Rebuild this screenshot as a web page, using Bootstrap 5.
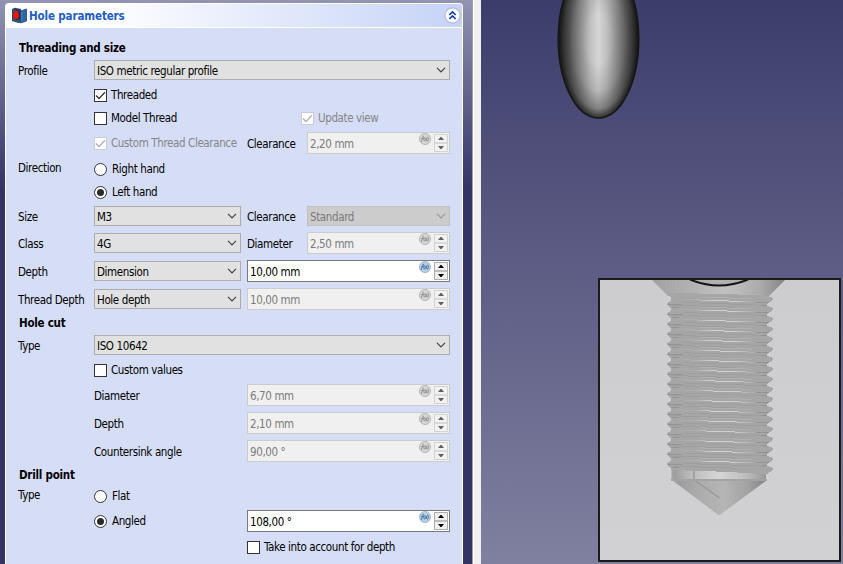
<!DOCTYPE html>
<html lang="en">
<head>
<meta charset="utf-8">
<title>Hole parameters</title>
<link href="https://cdn.jsdelivr.net/npm/bootstrap@5.3.0/dist/css/bootstrap.min.css" rel="stylesheet">
<style>
body{width:843px;height:564px;overflow:hidden;font:11.5px/16px "DejaVu Sans Condensed","DejaVu Sans",sans-serif;font-stretch:condensed;color:#000;letter-spacing:-.38px;white-space:nowrap}
.side{width:473px;padding:3px 9px 0 5px;background:linear-gradient(#9393b2,#333366 190px);border-right:1px solid #a0a0a0}
.splitter{width:8px;background:#f0f0f0;border-left:1px solid #fff}
.task{height:561px;border:1px solid #fff;border-bottom:0;border-radius:4px 4px 0 0;background:#d6def7;overflow:hidden}
.task-head{height:24px;border-bottom:1px solid #fff;background:linear-gradient(90deg,#fff 20%,#c6d3f7);padding:0 1px 0 5px}
.task-title{font-weight:700;color:#215dc6;letter-spacing:-.12px;margin-left:1px}
.params{display:grid;padding:9px 0 0 12px;grid-template-columns:76px 153px 60px 143px;grid-template-rows:22px 22px 28px 18px 32px 20px 26px 22px 32px 24px 32px 16px 28px 22px 28px 28px 28px 20px 22px 28px 24px;align-items:center}
.head{grid-column:1/-1;font-weight:700;letter-spacing:-.24px;padding-left:1px}
.params>label:not(.d-flex){padding-top:1px}
.c1{grid-column:1}.c2{grid-column:2}.c3{grid-column:3}.c4{grid-column:4}.wide{grid-column:2/-1}.c34{grid-column:3/-1}
.c2.combo{width:147px}
.combo{height:20px;border:1px solid #adadad;background:#e1e1e1;padding:0 3px 0 2px}
.combo span,.spin span{padding-top:1px}
.combo svg{color:#444}
.combo.off{background:#ccc;border-color:#bfbfbf;color:#7b7b7b}
.combo.off svg{color:#999}
.spin{height:22px;border:1px solid #7a7a7a;background:#fff;padding:0 1px 0 2px}
.spin.off{background:#f0f0f0;border-color:#ccc;color:#7b7b7b}
.spin svg{flex:none}
.fx-gap{margin-left:3px}
.off-text{color:#858585}
.tick{width:13px;height:13px;border:1px solid #333;background:#fff;margin-right:4px;flex:none;color:#333}
.off-text .tick{border-color:#ccc;color:#b0b0b0}
.tick.dot{border-radius:50%;margin-right:5px}
.tick svg{display:block}
.view{background:linear-gradient(#3d3d6c,#8080a0)}
.inset{left:117px;top:278px;width:243px;height:284px;border:2px solid #1b1b1b;background:linear-gradient(#cdcdd0,#d1d1d3)}
</style>
<script src="https://cdn.jsdelivr.net/npm/bootstrap@5.3.0/dist/js/bootstrap.bundle.min.js"></script>
</head>
<body class="d-flex m-0">
<svg width="0" height="0" class="position-absolute">
<symbol id="chev" viewBox="0 0 10 6"><path d="M1 .8 5 4.8 9 .8" fill="none" stroke="currentColor" stroke-width="1.2"/></symbol>
<symbol id="check" viewBox="0 0 11 11"><path d="M1 5.5 4 8.5 10 2.3" fill="none" stroke="currentColor" stroke-width="1.3"/></symbol>
<symbol id="fx-on" viewBox="0 0 12 12"><circle cx="6" cy="6" r="5.5" fill="#b9cee3" stroke="#9bb6d0"/><path d="M2.2 9 4 3.4H5M2.4 5.6H5M5.3 4.2Q4.4 6.3 5.3 8.5M6 8 8 4.8M6.3 4.8 8 8M8.8 3.6Q10 6 8.6 8.6" fill="none" stroke="#4a78a8" stroke-width="1"/></symbol>
<symbol id="fx-off" viewBox="0 0 12 12"><circle cx="6" cy="6" r="5.5" fill="#d6d6d6" stroke="#b5b5b5"/><path d="M2.2 9 4 3.4H5M2.4 5.6H5M5.3 4.2Q4.4 6.3 5.3 8.5M6 8 8 4.8M6.3 4.8 8 8M8.8 3.6Q10 6 8.6 8.6" fill="none" stroke="#929292" stroke-width="1"/></symbol>
<symbol id="step-on" viewBox="0 0 14 18"><path d="M.5.5h13v8.500H.5zM.5 9h13v8.500H.5z" fill="#f0f0f0" stroke="#adadad"/><path d="M4 6 6.5 3h1L10 6zM4 12 6.5 15h1L10 12z" fill="#000"/></symbol>
<symbol id="step-off" viewBox="0 0 14 18"><path d="M.5.5h13v8.500H.5zM.5 9h13v8.500H.5z" fill="#f2f2f2" stroke="#d2d2d2"/><path d="M4 6 6.5 3h1L10 6zM4 12 6.5 15h1L10 12z" fill="#606060"/></symbol>
</svg>

<aside class="side flex-shrink-0">
<div class="task">
<div class="task-head d-flex align-items-center">
<svg width="17" height="17" viewBox="0 0 17 17"><path d="M1 2 4 .8 10 2v13.2L7.500 16 1 14z" fill="#29445e"/><path d="M2 3 8 4v11L2 13.300z" fill="#3f5e78"/><ellipse cx="5.700" cy="8.200" rx="3.800" ry="5" fill="#182c40"/><ellipse cx="5" cy="8" rx="3" ry="4.300" fill="#e01818"/><path d="M9.500 4 15.500 2v12l-6 2z" fill="#2e66a3" stroke="#1e4672" stroke-width=".8"/><path d="M10.800 5v9.500" stroke="#4a86c4"/></svg>
<span class="task-title">Hole parameters</span>
<svg class="ms-auto" width="17" height="17" viewBox="0 0 17 17"><circle cx="8.500" cy="8.500" r="7.600" fill="#fff" stroke="#b4bbd8" stroke-width="1.300"/><path d="M5.300 8 8.500 4.900 11.700 8M5.300 12 8.500 8.900 11.700 12" fill="none" stroke="#0c3da5" stroke-width="1.600"/></svg>
</div>
<form class="params">
<div class="head">Threading and size</div>

<label class="c1">Profile</label>
<div class="combo wide d-flex align-items-center justify-content-between"><span>ISO metric regular profile</span><svg width="10" height="6"><use href="#chev"/></svg></div>

<label class="c2 d-flex align-items-center"><i class="tick"><svg width="11" height="11"><use href="#check"/></svg></i>Threaded</label>

<label class="c2 d-flex align-items-center"><i class="tick"></i>Model Thread</label>
<label class="c4 off-text d-flex align-items-center" style="margin-left:-6px"><i class="tick"><svg width="11" height="11"><use href="#check"/></svg></i>Update view</label>

<label class="c2 off-text d-flex align-items-center"><i class="tick"><svg width="11" height="11"><use href="#check"/></svg></i>Custom Thread Clearance</label>
<label class="c3">Clearance</label>
<div class="c4 spin off d-flex align-items-center"><span class="me-auto">2,20 mm</span><svg class="align-self-start" width="12" height="12"><use href="#fx-off"/></svg><svg class="fx-gap" width="14" height="18"><use href="#step-off"/></svg></div>

<label class="c1 pb-1">Direction</label>
<label class="c2 d-flex align-items-center"><i class="tick dot"></i>Right hand</label>

<label class="c2 d-flex align-items-center"><i class="tick dot"><svg width="11" height="11"><circle cx="5.500" cy="5.500" r="3.500" fill="#2a2a2a"/></svg></i>Left hand</label>

<label class="c1">Size</label>
<div class="c2 combo d-flex align-items-center justify-content-between"><span>M3</span><svg width="10" height="6"><use href="#chev"/></svg></div>
<label class="c3">Clearance</label>
<div class="c4 combo off d-flex align-items-center justify-content-between"><span>Standard</span><svg width="10" height="6"><use href="#chev"/></svg></div>

<label class="c1">Class</label>
<div class="c2 combo d-flex align-items-center justify-content-between"><span>4G</span><svg width="10" height="6"><use href="#chev"/></svg></div>
<label class="c3">Diameter</label>
<div class="c4 spin off d-flex align-items-center"><span class="me-auto">2,50 mm</span><svg class="align-self-start" width="12" height="12"><use href="#fx-off"/></svg><svg class="fx-gap" width="14" height="18"><use href="#step-off"/></svg></div>

<label class="c1">Depth</label>
<div class="c2 combo d-flex align-items-center justify-content-between"><span>Dimension</span><svg width="10" height="6"><use href="#chev"/></svg></div>
<div class="c34 spin d-flex align-items-center"><span class="me-auto">10,00 mm</span><svg class="align-self-start" width="12" height="12"><use href="#fx-on"/></svg><svg class="fx-gap" width="14" height="18"><use href="#step-on"/></svg></div>

<label class="c1">Thread Depth</label>
<div class="c2 combo d-flex align-items-center justify-content-between"><span>Hole depth</span><svg width="10" height="6"><use href="#chev"/></svg></div>
<div class="c34 spin off d-flex align-items-center"><span class="me-auto">10,00 mm</span><svg class="align-self-start" width="12" height="12"><use href="#fx-off"/></svg><svg class="fx-gap" width="14" height="18"><use href="#step-off"/></svg></div>

<div class="head">Hole cut</div>

<label class="c1">Type</label>
<div class="combo wide d-flex align-items-center justify-content-between"><span>ISO 10642</span><svg width="10" height="6"><use href="#chev"/></svg></div>

<label class="c2 d-flex align-items-center"><i class="tick"></i>Custom values</label>

<label class="c2">Diameter</label>
<div class="c34 spin off d-flex align-items-center"><span class="me-auto">6,70 mm</span><svg class="align-self-start" width="12" height="12"><use href="#fx-off"/></svg><svg class="fx-gap" width="14" height="18"><use href="#step-off"/></svg></div>

<label class="c2">Depth</label>
<div class="c34 spin off d-flex align-items-center"><span class="me-auto">2,10 mm</span><svg class="align-self-start" width="12" height="12"><use href="#fx-off"/></svg><svg class="fx-gap" width="14" height="18"><use href="#step-off"/></svg></div>

<label class="c2">Countersink angle</label>
<div class="c34 spin off d-flex align-items-center"><span class="me-auto">90,00 °</span><svg class="align-self-start" width="12" height="12"><use href="#fx-off"/></svg><svg class="fx-gap" width="14" height="18"><use href="#step-off"/></svg></div>

<div class="head">Drill point</div>

<label class="c1 pb-1">Type</label>
<label class="c2 d-flex align-items-center"><i class="tick dot"></i>Flat</label>

<label class="c2 d-flex align-items-center"><i class="tick dot"><svg width="11" height="11"><circle cx="5.500" cy="5.500" r="3.500" fill="#2a2a2a"/></svg></i>Angled</label>
<div class="c34 spin d-flex align-items-center"><span class="me-auto">108,00 °</span><svg class="align-self-start" width="12" height="12"><use href="#fx-on"/></svg><svg class="fx-gap" width="14" height="18"><use href="#step-on"/></svg></div>

<label class="c34 d-flex align-items-center"><i class="tick"></i>Take into account for depth</label>
</form>
</div>
</aside>
<div class="splitter flex-shrink-0"></div>
<main class="view flex-grow-1 position-relative overflow-hidden">
<svg class="d-block" width="362" height="130" viewBox="481 0 362 130">
<defs>
<linearGradient id="dome"><stop offset="0" stop-color="#2c2c2c"/><stop offset=".1" stop-color="#555"/><stop offset=".25" stop-color="#8c8c8c"/><stop offset=".4" stop-color="#c0c0c0"/><stop offset=".5" stop-color="#d6d6d6"/><stop offset=".6" stop-color="#c0c0c0"/><stop offset=".75" stop-color="#8c8c8c"/><stop offset=".9" stop-color="#555"/><stop offset="1" stop-color="#2c2c2c"/></linearGradient>
<radialGradient id="rim"><stop offset=".3" stop-color="#111" stop-opacity="0"/><stop offset=".65" stop-color="#111" stop-opacity=".14"/><stop offset=".88" stop-color="#111" stop-opacity=".42"/><stop offset="1" stop-color="#111" stop-opacity=".85"/></radialGradient>
</defs>
<ellipse cx="598.500" cy="39" rx="40.300" ry="79" fill="url(#dome)"/>
<ellipse cx="598.500" cy="39" rx="40.300" ry="79" fill="url(#rim)" stroke="#161616" stroke-width="1.500"/>
</svg>
<div class="inset position-absolute">
<svg class="d-block" width="239" height="280" viewBox="600 280 239 280">
<defs>
<linearGradient id="cone"><stop offset="0" stop-color="#a2a2a2"/><stop offset=".3" stop-color="#b2b2b2"/><stop offset=".55" stop-color="#c2c2c2"/><stop offset=".8" stop-color="#adadad"/><stop offset="1" stop-color="#858585"/></linearGradient>
<linearGradient id="band"><stop offset="0" stop-color="#999"/><stop offset=".2" stop-color="#bcbcbc"/><stop offset=".5" stop-color="#d6d6d6"/><stop offset=".8" stop-color="#bbb"/><stop offset="1" stop-color="#999"/></linearGradient>
<linearGradient id="tip"><stop offset="0" stop-color="#989898"/><stop offset=".3" stop-color="#adadad"/><stop offset=".55" stop-color="#b5b5b5"/><stop offset=".8" stop-color="#a2a2a2"/><stop offset="1" stop-color="#808080"/></linearGradient>
<linearGradient id="shine" gradientUnits="userSpaceOnUse" x1="672" x2="767" y1="0" y2="0"><stop offset="0" stop-color="#a5a5a5"/><stop offset=".28" stop-color="#b4b4b4"/><stop offset=".42" stop-color="#d2d2d2"/><stop offset=".65" stop-color="#d0d0d0"/><stop offset=".82" stop-color="#b2b2b2"/><stop offset="1" stop-color="#a5a5a5"/></linearGradient>
</defs>
<path d="M652 280H785L769 296H668z" fill="url(#cone)"/>
<path d="M690 280Q719 291.500 748 280z" fill="#b0b0b0"/>
<path d="M690 279.500Q719 291.500 748 279.500" fill="none" stroke="#141414" stroke-width="2"/>
<path d="M672 480 719 515.500 767 480z" fill="url(#tip)"/>
<path d="M695 480.500 719.500 498" stroke="#989898" stroke-width="1.500"/>
<path d="M672 468H766V480H672z" fill="url(#band)"/><path d="M694 470V480M672.500 468V480" stroke="#a3a3a3" stroke-width="2"/><path d="M671 480H767" stroke="#a3a3a3" stroke-width="2"/>
<g id="thread" fill="none" shape-rendering="crispEdges"></g>
</svg>
</div>
</main>
<script>
// Builds the screw thread: toothed outline, then stepped helix lines every 10px.
const g = document.getElementById('thread');
const add = (d, stroke, fill) => {
  const p = document.createElementNS('http://www.w3.org/2000/svg', 'path');
  p.setAttribute('d', d);
  if (stroke) p.setAttribute('stroke', stroke);
  if (fill) p.setAttribute('fill', fill);
  g.appendChild(p);
};
let outline = 'M667 293 L728 294 L769 296';
for (let i = 0; i < 18; i++) { const y = 296 + i * 10; outline += `L767 ${y}L773 ${y + 2}V${y + 4}L767 ${y + 8}`; }
outline += 'L760 474L730 472L701 471L671 470';
for (let i = 16; i >= 0; i--) { const y = 304 + i * 10; outline += `L671 ${y + 4}L667 ${y + 1}V${y - 1}L671 ${y - 3}`; }
add(outline + 'L671 298Z', null, '#a6a6a6');
for (let i = 0; i < 17; i++) {
  const b = 729 - i * 1.75, y = 301.5 + i * 10;
  const steps = (dy, from, to, color) => {
    for (let k = -3; k < 4; k++) {
      const x1 = Math.max(from, b + k * 29), x2 = Math.min(to, b + (k + 1) * 29);
      if (x2 > x1) add(`M${x1} ${y + dy + k}H${x2}`, color);
    }
  };
  steps(0, 676, 755, 'url(#shine)');
  steps(3, 684, 765, '#9f9f9f');
  steps(-3, 700, 752, '#b0b0b0');
  steps(6, 673, 735, '#9e9e9e');
  add(`M668 ${y + 3}H682M672 ${y + 6}H679M756 ${y + 1}H769M762 ${y + 4}H767`, '#939393');
}
// Lines painted with a gradient need a non-empty box only when units follow the shape; these use fixed user units.
</script>
</body>
</html>
